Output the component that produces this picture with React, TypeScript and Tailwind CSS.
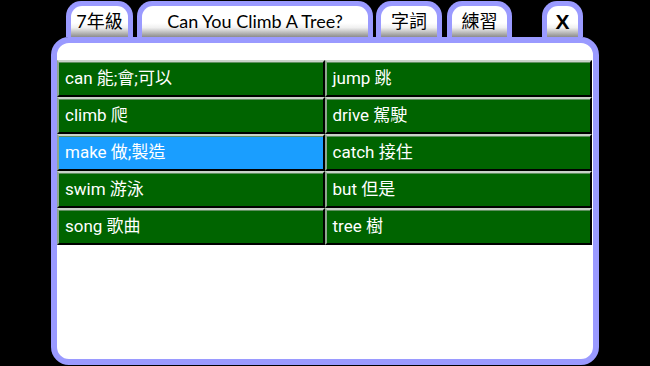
import React from "react";

const WORDS: [string, string][] = [
  ["can 能;會;可以", "jump 跳"],
  ["climb 爬", "drive 駕駛"],
  ["make 做;製造", "catch 接住"],
  ["swim 游泳", "but 但是"],
  ["song 歌曲", "tree 樹"],
];

const SELECTED = "make 做;製造";

function Tab({
  label,
  width,
  bold,
}: {
  label: string;
  width: string;
  bold?: boolean;
}) {
  return (
    <div className={`h-[36px] shrink-0 rounded-t-[15px] bg-[#9a9aff] px-[5px] pt-[5px] ${width}`}>
      <div
        className={`flex h-full items-center justify-center rounded-t-[11px] bg-[linear-gradient(to_bottom,#ffffff_0%,#ffffff_55%,#f0f0f0_70%,#8c8c8c_100%)] text-black ${
          bold
            ? "text-[21px] font-bold font-['Liberation_Sans',sans-serif]"
            : "text-[18px] font-['Lato','Noto_Sans_CJK_TC',sans-serif]"
        }`}
      >
        {label}
      </div>
    </div>
  );
}

function WordCell({ text }: { text: string }) {
  const active = text === SELECTED;
  return (
    <div
      className={`flex h-[37px] items-center border-t-2 border-l-2 border-b-2 border-r-2 border-t-[#c9d2c9] border-l-[#8fa88f] border-b-black border-r-black pl-[6px] text-[17px] text-white font-['Roboto','Noto_Sans_CJK_TC',sans-serif] shadow-[inset_0_1px_0_#5f8f5f] ${
        active ? "bg-[#1a9eff]" : "bg-[#006400]"
      }`}
    >
      {text}
    </div>
  );
}

export default function App() {
  return (
    <div className="h-[366px] w-[650px] overflow-hidden bg-black">
      <div className="flex h-[37px] items-end pl-[66px]">
        <Tab label="7年級" width="w-[67px]" />
        <div className="w-[4px]" />
        <Tab label="Can You Climb A Tree?" width="w-[236px]" />
        <div className="w-[3px]" />
        <Tab label="字詞" width="w-[66px]" />
        <div className="w-[5px]" />
        <Tab label="練習" width="w-[65px]" />
        <div className="w-[30px]" />
        <Tab label="X" width="w-[41px]" bold />
      </div>
      <div className="ml-[51px] h-[328px] w-[548px] rounded-[18px] border-[6px] border-[#9a9aff] bg-white pr-[1px] pt-[17px]">
        <div className="grid grid-cols-2">
          {WORDS.map(([a, b]) => (
            <React.Fragment key={a}>
              <WordCell text={a} />
              <WordCell text={b} />
            </React.Fragment>
          ))}
        </div>
      </div>
    </div>
  );
}
